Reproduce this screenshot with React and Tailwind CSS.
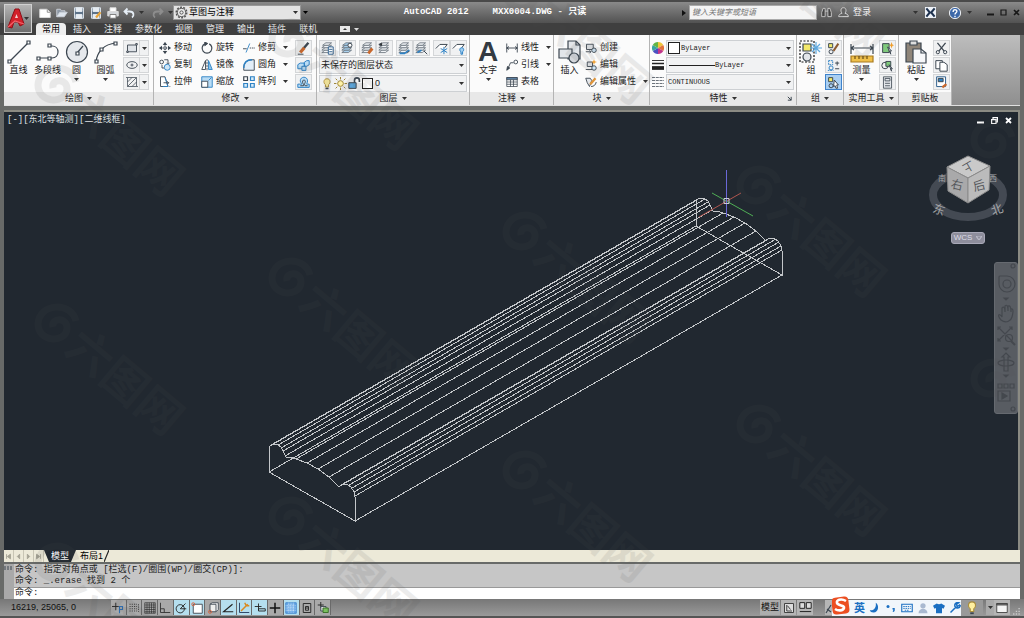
import React from "react";

const Svg = ({ s = 13, h, box = "0 0 16 16", children, className = "" }) => (
  <svg
    width={s}
    height={h || s}
    viewBox={box}
    fill="none"
    stroke="#3c4650"
    strokeWidth="1.2"
    className={`shrink-0 ${className}`}
    aria-hidden="true"
  >
    {children}
  </svg>
);

const Caret = ({ className = "text-[#333]" }) => (
  <svg width="5" height="3" viewBox="0 0 5 3" className={`shrink-0 ${className}`} aria-hidden="true">
    <path d="M0 0h5L2.5 3z" fill="currentColor" />
  </svg>
);

const Layers = ({ children, fill = "#f2f5f8" }) => (
  <>
    <g fill={fill} stroke="#66707a" strokeWidth="1">
      <path d="M1 13l4-3h8l-4 3z" />
      <path d="M1 10l4-3h8l-4 3z" />
      <path d="M1 7l4-3h8l-4 3z" />
      <path d="M2 4l4-3h7l-4 3z" />
    </g>
    {children}
  </>
);

const icons = {
  /* quick access */
  new: (
    <g stroke="#ddd">
      <path d="M1 3h10l4 4v7H1z" fill="#fff" />
      <path d="M11 3v4h4" stroke="#888" />
    </g>
  ),
  open: (
    <g stroke="#cdd3da">
      <path d="M1 13V3h5l1 2h5v2" fill="#8d98a5" />
      <path d="M1 13l4-6h10l-4 6z" fill="#dfe6ee" />
    </g>
  ),
  save: (
    <g stroke="#e4ebf2">
      <path d="M2 1h12v14H2z" fill="#5d7288" />
      <path d="M4 1h8v5H4zM4 10h8v5H4z" fill="#e8edf2" />
    </g>
  ),
  saveAs: (
    <g stroke="#e4ebf2">
      <path d="M2 1h12v14H2z" fill="#5d7288" />
      <path d="M4 1h8v5H4zM4 10h8v5H4z" fill="#e8edf2" />
      <path d="M8 14l6-7" stroke="#e9a53a" strokeWidth="3" />
    </g>
  ),
  print: (
    <g stroke="#dedede">
      <path d="M4 6V1h8v5" fill="#fff" />
      <path d="M1 6h14v6H1z" fill="#d3d6da" />
      <path d="M4 10h8v5H4z" fill="#fff" stroke="#777" />
    </g>
  ),
  undo: <path d="M6 2L2 6l4 4M2 6h7c6 0 6 6 3 8" stroke="#e6eef6" strokeWidth="2.4" />,
  redo: <path d="M10 2l4 4-4 4M14 6H7c-6 0-6 6-3 8" stroke="#8d8d8d" strokeWidth="2.4" />,
  gear: (
    <g stroke="#555">
      <circle cx="8" cy="8" r="6.500" strokeWidth="1.800" strokeDasharray="2.4 1.6" />
      <circle cx="8" cy="8" r="5" fill="#eee" />
      <circle cx="8" cy="8" r="2" />
    </g>
  ),
  /* draw */
  line: (
    <g>
      <path d="M3 21L21 3" />
      <path d="M1 20h3v3H1zM20 1h3v3h-3z" fill="#fff" />
    </g>
  ),
  pline: (
    <g>
      <path d="M2 18h14c8 0 8-12 0-12h-2" />
      <path d="M1 17h3v3H1zM12 17h3v3h-3zM12 4h3v3h-3z" fill="#fff" />
    </g>
  ),
  circle: (
    <g>
      <circle cx="12" cy="12" r="10.5" fill="#e5e8ec" />
      <path d="M12 13l6-7" />
      <path d="M11 12h3v3h-3z" fill="#fff" />
    </g>
  ),
  arc: (
    <g>
      <path d="M2 22C3 12 10 4 22 3" />
      <path d="M1 20h3v3H1zM6 8h3v3H6zM20 2h3v3h-3z" fill="#fff" />
    </g>
  ),
  rect: (
    <g>
      <path d="M2 4h12v9H2z" fill="#dfe3e8" />
      <path d="M1 12h2v2H1zM13 2h2v2h-2z" fill="#fff" />
    </g>
  ),
  ellipse: (
    <g>
      <ellipse cx="8" cy="8" rx="7" ry="4.5" />
      <path d="M8 6v4M6 8h4" />
    </g>
  ),
  hatch: <path d="M2 2h12v12H2zM2 8l6-6M2 14L14 2M8 14l6-6M0 2h2M14 14h2" strokeWidth="1" />,
  /* modify */
  move: (
    <g>
      <path d="M8 1v14M1 8h14" strokeDasharray="4 2" />
      <path d="M8 0l3 4H5zM8 16l3-4H5zM0 8l4-3v6zM16 8l-4-3v6z" fill="#3c4650" stroke="none" />
      <path d="M6.500 6.500h3v3h-3z" fill="#fff" />
    </g>
  ),
  rotate: (
    <g>
      <path d="M5 2.500A6.500 6.500 0 1 0 11 2.500" strokeWidth="1.600" />
      <path d="M5 0l4 2-4 3z" fill="#3c4650" />
    </g>
  ),
  trim: (
    <g>
      <path d="M0 9h5" />
      <path d="M4 14L9 2" stroke="#2e82c4" />
      <path d="M9 8h7" strokeDasharray="2 1" />
    </g>
  ),
  copy: (
    <g>
      <circle cx="3.500" cy="4" r="2.500" />
      <path d="M7 1h5v5M10 5l2 2 2-2" />
      <circle cx="11" cy="11" r="4" fill="#cfe6f7" stroke="#2e82c4" />
      <path d="M4 8v4h3" />
    </g>
  ),
  mirror: (
    <g>
      <path d="M6 2v12H1z" fill="#fff" />
      <path d="M10 2v12h5z" fill="#8cc3ea" stroke="#2e82c4" />
      <path d="M8 0v16" strokeDasharray="3 1" />
    </g>
  ),
  fillet: (
    <g>
      <path d="M1 15V12C1 5 5 1 12 1h3v14z" fill="#e2eef8" />
      <path d="M1 12C1 5 5 1 12 1" stroke="#2e82c4" strokeWidth="2" />
    </g>
  ),
  stretch: (
    <g>
      <path d="M2 1h6l4 13H2z" fill="#fff" />
      <path d="M8 2l4 12H5" stroke="#2e82c4" />
      <path d="M6 9h7M11 7l2 2-2 2M14 14h1" />
    </g>
  ),
  scale: (
    <g stroke="#2e82c4">
      <path d="M1 1h14v14H1z" fill="#b9dcf5" />
      <path d="M1 7h8v8H1z" fill="#fff" stroke="#3c4650" />
      <path d="M10 6l4-4" />
    </g>
  ),
  array: (
    <g strokeWidth="1.600">
      <path d="M1 1h5v5H1z" />
      <path d="M10 1h5v5h-5zM1 10h5v5H1zM10 10h5v5h-5z" fill="#d9ecf9" stroke="#2e82c4" />
    </g>
  ),
  erase: (
    <g>
      <path d="M14 1L8 8" strokeWidth="3" />
      <path d="M9 7L4 13" stroke="#c9682d" strokeWidth="4" />
      <path d="M1 15h7" />
    </g>
  ),
  explode: (
    <g stroke="#2e82c4" fill="#b9dcf5">
      <path d="M1 7l3-2h5v7H1zM9 4l3-2h3v5l-3 2H9z" />
      <path d="M6 9h5v5H6z" />
    </g>
  ),
  offset: (
    <g>
      <path d="M1 14v-4h5c0-1-2-2-2-4 0-6 9-6 9 0 0 2-1 3-1 4h3v4z" fill="#b9dcf5" stroke="#2e82c4" />
      <path d="M4 12h4c1-2-2-3-1-6 1-2 4-1 3 2-1 2-1 3 0 4h3" />
    </g>
  ),
  /* layers */
  layerProps: <Layers><path d="M9 6h6v9H9zM10 9h4M10 12h4" fill="#fff" stroke="#2e5f8c" /></Layers>,
  layerCur: <Layers fill="#a9d2f0"><circle cx="11" cy="4" r="2.500" fill="#fff" /></Layers>,
  layerMatch: <Layers><path d="M9 14l5-6" stroke="#c9682d" strokeWidth="3.500" /></Layers>,
  layerPrev: <Layers><path d="M5 1L1 3l4 2" fill="#333" /></Layers>,
  layerIso: <Layers><path d="M2 14h6l6-4" stroke="#2e82c4" strokeWidth="2" /><path d="M11 14l3-3" /></Layers>,
  layerUniso: <Layers><path d="M3 13l5-3" stroke="#2e82c4" strokeWidth="2" /><path d="M11 11l4 4" /></Layers>,
  layerFreeze: (
    <g>
      <path d="M1 8l5-5h9l-3 4" fill="#fff" />
      <path d="M11 6v9M7 8l8 5M15 8l-8 5" stroke="#2e82c4" />
    </g>
  ),
  layerOff: (
    <g>
      <path d="M1 8l5-5h9l-3 4" fill="#fff" />
      <path d="M12 7c-3 0-3 4-1 5v3h2v-3c2-1 2-5-1-5z" fill="#9fcdf0" stroke="#2e82c4" />
    </g>
  ),
  bulb: (
    <g>
      <path d="M8 1C3 1 3 7 6 9v3h4V9c3-2 3-8-2-8z" fill="#fff0a0" stroke="#a88c3c" />
      <path d="M6 14h4" strokeWidth="2" />
    </g>
  ),
  sun: (
    <g stroke="#9c8437">
      <circle cx="8" cy="8" r="3.500" fill="#fff2a8" />
      <path d="M8 0v3M8 13v3M0 8h3M13 8h3M2 2l2 2M12 12l2 2M14 2l-2 2M2 14l2-2" />
    </g>
  ),
  unlock: (
    <g>
      <path d="M1 7h9v7H1z" fill="#5ba3d8" />
      <path d="M8 7V4c0-4 6-4 6 0v2" strokeWidth="2" />
    </g>
  ),
  /* annotation */
  dim: <path d="M1 2v12M15 2v12M1 8h14M4 6L1 8l3 2M12 6l3 2-3 2" />,
  leader: (
    <g>
      <path d="M2 14L6 5h4" />
      <path d="M1 15l1-5 3 2z" fill="#3c4650" />
      <circle cx="13" cy="4" r="2.500" fill="#fff" />
    </g>
  ),
  table: (
    <g strokeWidth="1">
      <path d="M1 2h14v12H1z" fill="#fff" />
      <path d="M1 2h14v3H1z" fill="#5c7fa0" />
      <path d="M1 8h14M1 11h14M6 5v9M10 5v9" />
    </g>
  ),
  /* block */
  insert: (
    <g>
      <path d="M10 1h8l4 4v14H10z" fill="#e3e6ea" />
      <path d="M18 1v4h4" />
      <path d="M1 9h13v9H1z" fill="#e3e6ea" />
      <circle cx="16" cy="18" r="5" fill="#d3d7dc" />
    </g>
  ),
  create: (
    <g>
      <path d="M2 3h9v7H2z" fill="#e3e6ea" />
      <circle cx="12" cy="11" r="3" fill="#cfe6f7" />
      <path d="M1 13h7M6 11l2 2-2 2" />
    </g>
  ),
  blockEdit: (
    <g>
      <path d="M3 4h7v6H3zM1 14h9" fill="#e3e6ea" />
      <circle cx="12" cy="12" r="3" fill="#cfe6f7" />
      <path d="M12 0l1 3 3 1-3 1-1 3-1-3-3-1 3-1z" fill="#f0a030" stroke="none" />
    </g>
  ),
  attr: (
    <g>
      <path d="M1 3h6l2 3-3 8-3-5z" fill="#e3e6ea" />
      <path d="M7 11l7-8" stroke="#e0953a" strokeWidth="3" />
      <path d="M8 14c4 0 6-2 7-6" />
    </g>
  ),
  /* properties */
  wheel: (
    <g stroke="none">
      <path d="M8 8L8 0A8 8 0 0 1 15 4z" fill="#f0c53a" />
      <path d="M8 8L15 4A8 8 0 0 1 15 12z" fill="#e2733a" />
      <path d="M8 8L15 12A8 8 0 0 1 8 16z" fill="#c1358b" />
      <path d="M8 8V16A8 8 0 0 1 1 12z" fill="#4a4fc0" />
      <path d="M8 8L1 12A8 8 0 0 1 1 4z" fill="#38a3a0" />
      <path d="M8 8L1 4A8 8 0 0 1 8 0z" fill="#62b545" />
    </g>
  ),
  weights: (
    <g stroke="#222">
      <path d="M0 2h16" />
      <path d="M0 6h16" strokeWidth="2" />
      <path d="M0 12h16" strokeWidth="5" />
    </g>
  ),
  linetypes: <path d="M0 2h16M0 6h16M0 10h16M0 14h16" strokeDasharray="4 1" strokeWidth="1" />,
  /* groups */
  group: (
    <g>
      <path d="M1 1h14v21H1z" stroke="#111" strokeDasharray="2 1.500" />
      <path d="M4 4h8v7H4z" fill="#f3e96b" />
      <circle cx="8" cy="17" r="4" fill="#e3e6ea" />
      <path d="M17 2v12M11 8h12M13 4l8 8M21 4l-8 8" stroke="#5fa9de" />
    </g>
  ),
  groupEdit: (
    <g>
      <path d="M2 2h5v5H2z" fill="#f3e96b" />
      <circle cx="5" cy="12" r="2.500" />
      <path d="M8 11l6-9" stroke="#8c5a30" strokeWidth="2.500" />
    </g>
  ),
  ungroup: (
    <g>
      <path d="M2 2h5v5H2zM1 14h7" stroke="#2e82c4" strokeDasharray="2 1" />
      <circle cx="5" cy="11" r="2.500" stroke="#2e82c4" />
      <path d="M10 5h5M12.500 3v5M10 12h5" />
    </g>
  ),
  groupSel: (
    <g>
      <path d="M2 2h5v5H2z" fill="#f3e96b" />
      <circle cx="5" cy="12" r="2.500" />
      <path d="M9 5l5 6-2 0 1 4-2 0-1-3-2 1z" fill="#fff" />
    </g>
  ),
  /* utilities */
  measure: (
    <g>
      <path d="M1 4v10M23 4v10M1 8h22M4 6L1 8l3 2M20 6l3 2-3 2" />
      <path d="M1 16h22v6H1z" fill="#f0c04a" stroke="#a87a20" />
      <path d="M5 16v3M9 16v3M13 16v3M17 16v3" stroke="#6d4f12" />
    </g>
  ),
  quickSel: (
    <g>
      <path d="M2 2h8v11H2z" fill="#7fc97c" />
      <path d="M8 6l5 5-2 0 1 4z" fill="#fff" />
      <path d="M13 0l1 3 2 1-2 1-1 3-1-3-2-1 2-1z" fill="#f0a030" stroke="none" />
    </g>
  ),
  selAll: (
    <g>
      <circle cx="5" cy="8" r="4" />
      <path d="M6 3h6v6H6z" fill="#7fc97c" />
      <path d="M10 7l4 5-2 0 1 3z" fill="#fff" />
    </g>
  ),
  calc: (
    <g strokeWidth="1">
      <path d="M3 1h10v14H3z" fill="#e3e6ea" />
      <path d="M5 3h6v3H5zM5 9h6M5 12h6" />
    </g>
  ),
  /* clipboard */
  paste: (
    <g>
      <path d="M2 3h15v19H2z" fill="#8f8579" />
      <path d="M6 1h7v4H6z" fill="#ddd" />
      <path d="M9 9h8l5 4v10H9z" fill="#f6f7f9" />
      <path d="M17 9v4h5" />
    </g>
  ),
  cut: (
    <g>
      <path d="M3 1l8 10M13 1L5 11" strokeWidth="1.600" />
      <circle cx="3.500" cy="12.500" r="2" />
      <circle cx="12.500" cy="12.500" r="2" />
    </g>
  ),
  copyClip: (
    <g fill="#fff">
      <path d="M1 2h8v10H1z" />
      <path d="M6 4h5l4 3v8H6z" />
    </g>
  ),
  matchProp: (
    <g>
      <path d="M2 1h11v12H2z" fill="#fff" stroke="#2e5f8c" />
      <path d="M4 3h6v4H4z" fill="#2e82c4" />
      <path d="M9 14l5-4" stroke="#c9682d" strokeWidth="3" />
    </g>
  ),
  /* status bar */
  infer: (
    <g stroke="#222">
      <path d="M5 1v10M0 6h9" />
      <path d="M10 6h4v4h-4zM10 10v5" stroke="#2e6db0" strokeWidth="1.500" />
    </g>
  ),
  snap: <path d="M2 3h10M2 6h10M2 9h10M2 12h10M14 3v10" stroke="#333" strokeDasharray="1.500 1.500" />,
  grid: <path d="M1 1h14v14H1zM1 4h14M1 7h14M1 10h14M1 13h14M4 1v14M7 1v14M10 1v14M13 1v14" stroke="#222" strokeWidth=".8" />,
  ortho: <path d="M2 1v13h13M2 9h5v5" stroke="#333" />,
  polar: (
    <g stroke="#222">
      <circle cx="7" cy="9" r="5.500" />
      <path d="M7 9l7-7M7 9h8" />
    </g>
  ),
  osnap: (
    <g>
      <path d="M3 3h12v12H3z" fill="#fff" />
      <circle cx="3" cy="3" r="2" stroke="#d9603a" />
    </g>
  ),
  osnap3d: (
    <g>
      <path d="M4 3l3-2h8v9l-3 3" fill="#fff" />
      <path d="M4 3h8v10H4z" fill="#eee" />
      <circle cx="4" cy="13" r="2" stroke="#d9603a" />
    </g>
  ),
  otrack: <path d="M14 3L2 13h13" stroke="#222" strokeWidth="1.500" />,
  ducs: (
    <g>
      <path d="M2 1v13h13" stroke="#223a5c" />
      <path d="M4 12l9-9M9 1l2 4 4 0" stroke="#d98a20" strokeWidth="2" />
    </g>
  ),
  dyn: <path d="M6 2v9M1 6h9M6 9h9v3H6z" stroke="#222" />,
  lwt: <path d="M8 1v14M1 8h14" stroke="#111" strokeWidth="2" />,
  tpy: (
    <g stroke="#3f84cc">
      <path d="M1 1h14v14H1z" fill="#6cabe8" />
      <path d="M1 5h14M1 8h14M1 11h14M5 1v14M8 1v14M11 1v14" stroke="#d8ebfb" strokeDasharray="1 1" />
    </g>
  ),
  qp: <path d="M3 2h10v12H3zM6 6h4v5H6zM6 8h4" stroke="#222" />,
  sc: (
    <g>
      <path d="M5 0v8M1 4h8" stroke="#222" />
      <path d="M5 6h7v6H5z" fill="#ddd" />
      <path d="M8 8h7v6H8z" fill="#7bbf5f" stroke="#356b24" />
    </g>
  ),
  modelSpace: (
    <g stroke="#333">
      <path d="M2 2h12v12H2z" fill="#ddd" />
      <path d="M5 4v8h7M6 5l4 5" />
    </g>
  ),
  viewports: <path d="M1 2h6v7H1zM9 2h6v7H9zM1 13h14" stroke="#222" fill="#ddd" />,
  screen: (
    <g stroke="#444">
      <path d="M1 2h14v12H1z" fill="#f4f4f4" />
      <path d="M1 2h14v2H1z" fill="#777" />
    </g>
  ),
};

const Icon = ({ n, s = 13, box, className }) => (
  <Svg s={s} box={box} className={className}>
    {icons[n]}
  </Svg>
);

const Big = ({ n, label, caret, className = "w-[29px]" }) => (
  <button className={`flex flex-col items-center pt-[5px] ${className}`}>
    <Icon n={n} s={24} box="0 0 24 24" />
    <span className="mt-px leading-[11px]">{label}</span>
    {caret && <Caret className="mt-0.5 text-[#333]" />}
  </button>
);

const Small = ({ n, label, caret }) => (
  <button className="flex h-[17px] items-center gap-[3px] whitespace-nowrap">
    <Icon n={n} s={12} />
    <span>{label}</span>
    {caret && <Caret className="ml-1 text-[#333]" />}
  </button>
);

const Box = ({ n, on, label }) => (
  <button
    aria-label={label}
    className={`flex h-4 w-[17px] items-center justify-center border ${
      on ? "border-[#3f83cc] bg-[#a9cff2]" : "border-[#d4d6d8] bg-[#f0f1f2]"
    }`}
  >
    <Icon n={n} s={13} />
  </button>
);

const Split = ({ n, label }) => (
  <button aria-label={label} className="flex h-4 w-[26px] items-center border border-[#d4d6d8] bg-[#f0f1f2]">
    <span className="flex h-full w-4 items-center justify-center border-r border-[#d4d6d8]">
      <Icon n={n} s={12} />
    </span>
    <span className="flex flex-1 justify-center">
      <Caret />
    </span>
  </button>
);

const Combo = ({ label, value, children, mono, line }) => (
  <label className="relative flex h-4 min-w-0 flex-1 items-center border border-[#cdd0d3] bg-[#f1f2f3] pl-px">
    {children}
    {line && <span className="ml-px h-px w-[46px] shrink-0 bg-[#222]" />}
    <select
      aria-label={label}
      className={`h-full min-w-0 flex-1 appearance-none bg-transparent pr-3 outline-none ${
        mono ? "font-['Liberation_Mono',monospace] text-[7px]" : ""
      }`}
    >
      <option>{value}</option>
    </select>
    <span className="pointer-events-none absolute right-0.5">
      <Caret />
    </span>
  </label>
);

const Panel = ({ title, className, children, caret = true, corner }) => (
  <section className={`flex shrink-0 flex-col border-r border-[#b4b4b4] bg-[#fbfbfb] ${className}`}>
    <div className="flex h-[57px]">{children}</div>
    <div className="relative flex h-[13px] items-center justify-center gap-1 bg-[#e8e8e8]">
      {title}
      {caret && <Caret />}
      {corner && (
        <Svg s={5} box="0 0 6 6" className="absolute right-1">
          <path d="M1 1l4 4M5 1v4H1" />
        </Svg>
      )}
    </div>
  </section>
);

const tabs = ["插入", "注释", "参数化", "视图", "管理", "输出", "插件", "联机"];

const quick = [
  ["new", "新建"],
  ["open", "打开"],
  ["save", "保存"],
  ["saveAs", "另存为"],
  ["print", "打印"],
];

const Header = () => (
  <header className="flex bg-[#3f3f3f] pl-1">
    <button
      aria-label="应用程序菜单"
      className="relative z-10 mt-1 flex h-[29px] w-7 shrink-0 items-center justify-center border border-[#d0d0d0] bg-linear-to-b from-[#b5b5b5] to-[#6d6d6d]"
    >
      <Svg s={18} h={21} box="0 0 18 21" className="-ml-1">
        <path d="M1 19L8 1h4l5 15-4 2-2-4H7l-2 6z" fill="#d3202a" stroke="#8d0f17" strokeWidth="1" />
        <path d="M8 10l1.500-4L11 10z" fill="#f3d0d0" stroke="none" />
        <path d="M1 19l7-6 9 3" stroke="#f0656b" />
      </Svg>
      <Caret className="absolute right-0.5 text-[#333]" />
    </button>
    <div className="min-w-0 flex-1">
      <div className="-ml-8 flex h-[23px] items-center border-t-2 border-[#4a4a4a] bg-linear-to-b from-[#8a8a8a] to-[#525252] pl-[38px] text-white">
        <div className="flex items-center gap-1">
          {quick.map(([n, label]) => (
            <button key={n} aria-label={label} className="flex w-[13px] justify-center">
              <Icon n={n} s={12} />
            </button>
          ))}
          <button aria-label="放弃" className="flex items-center gap-1">
            <Icon n="undo" s={12} />
            <Caret />
          </button>
          <button aria-label="重做" className="ml-1 flex items-center gap-1">
            <Icon n="redo" s={12} />
            <Caret />
          </button>
        </div>
        <label className="relative flex h-[15px] w-32 items-center border border-[#999] bg-[#e4e4e4] pl-px text-black">
          <Icon n="gear" s={13} />
          <select aria-label="工作空间" className="ml-px h-full flex-1 appearance-none bg-transparent outline-none">
            <option>草图与注释</option>
          </select>
          <Caret className="pointer-events-none absolute right-0.5 text-[#333]" />
        </label>
        <Caret className="ml-0.5 text-black" />
        <h1 className="flex flex-1 justify-center gap-6 whitespace-pre font-['Liberation_Mono','Noto_Sans_CJK_SC',monospace] font-bold">
          <span>AutoCAD 2012</span>
          <span>MXX0004.DWG - 只读</span>
        </h1>
        <div className="flex items-center">
          <svg width="4" height="6" viewBox="0 0 4 6" aria-hidden="true">
            <path d="M0 0l4 3-4 3z" fill="#111" />
          </svg>
          <input
            aria-label="搜索"
            placeholder="键入关键字或短语"
            className="ml-[3px] h-[15px] w-32 border border-[#aaa] bg-[#f4f4f4] px-0.5 text-[8px] text-black italic outline-none placeholder:text-[#777]"
          />
          <button aria-label="查找" className="ml-1">
            <Svg s={11}>
              <path d="M1 14V8l2-6h3v12zM15 14V8l-2-6h-3v12zM6 6h4" fill="#444" stroke="#ddd" />
            </Svg>
          </button>
          <button className="ml-1.5 flex items-center gap-1">
            <Svg s={11}>
              <path d="M8 1c-5 0-4 7-2 8-3 1-5 2-5 5h14c0-3-2-4-5-5 2-1 3-8-2-8z" fill="#666" stroke="#eee" />
            </Svg>
            登录
          </button>
          <Caret className="ml-[42px] text-[#333]" />
          <button aria-label="Exchange" className="ml-[7px]">
            <Svg s={11}>
              <path d="M0 0h16v16H0z" fill="#eef2f8" stroke="none" />
              <path d="M2 2l5 6-5 6M14 2L9 8l5 6" stroke="#1f3350" strokeWidth="3" />
            </Svg>
          </button>
          <button aria-label="帮助" className="ml-[13px] flex items-center gap-1.5">
            <Svg s={12}>
              <circle cx="8" cy="8" r="7.500" fill="#3d68a8" stroke="#fff" />
              <path d="M5.500 6.500c0-4 5-3.500 5-.8 0 2-2.500 1.800-2.500 4.300M8 11.500v2" stroke="#fff" strokeWidth="1.800" />
            </Svg>
            <Caret />
          </button>
          <div className="ml-[15px] flex gap-1.5 pr-1">
            <button aria-label="最小化">
              <Svg s={7} box="0 0 7 7"><path d="M0 5.500h7" stroke="#181818" strokeWidth="2" /></Svg>
            </button>
            <button aria-label="最大化">
              <Svg s={7} box="0 0 7 7"><path d="M1 1h5v5H1z" stroke="#181818" /></Svg>
            </button>
            <button aria-label="关闭">
              <Svg s={7} box="0 0 7 7"><path d="M1 1l5 5M6 1L1 6" stroke="#181818" strokeWidth="1.600" /></Svg>
            </button>
          </div>
        </div>
      </div>
      <nav className="flex h-3 items-center gap-px pl-1 text-[#e8e8e8]">
        <button className="h-[13px] rounded-t-sm bg-[#eeeeee] px-1.5 leading-[12px] text-black">常用</button>
        {tabs.map((t) => (
          <button key={t} className="px-1.5 leading-[12px]">
            {t}
          </button>
        ))}
        <button aria-label="最小化功能区" className="ml-4 flex items-center gap-1">
          <Svg s={10} h={6} box="0 0 10 6">
            <path d="M0 0h10v6H0z" fill="#e8e8e8" stroke="none" />
            <path d="M3 4l2-2 2 2z" fill="#333" stroke="none" />
          </Svg>
          <Caret className="text-[#ddd]" />
        </button>
      </nav>
    </div>
  </header>
);

const Ribbon = () => (
  <div className="mx-1 flex border-b border-[#e0e0e0] bg-linear-to-b from-[#bdbdbd] to-[#8f8f8f] text-[#222]">
    <Panel title="绘图" className="w-[150px]">
      <Big n="line" label="直线" />
      <Big n="pline" label="多段线" />
      <Big n="circle" label="圆" caret />
      <Big n="arc" label="圆弧" caret />
      <div className="ml-[3px] flex flex-col gap-px pt-[5px]">
        <Split n="rect" label="矩形" />
        <Split n="ellipse" label="椭圆" />
        <Split n="hatch" label="图案填充" />
      </div>
    </Panel>
    <Panel title="修改" className="w-[163px]">
      <div className="flex gap-[9px] pt-1 pl-[5px]">
        <div>
          <Small n="move" label="移动" />
          <Small n="copy" label="复制" />
          <Small n="stretch" label="拉伸" />
        </div>
        <div>
          <Small n="rotate" label="旋转" />
          <Small n="mirror" label="镜像" />
          <Small n="scale" label="缩放" />
        </div>
        <div>
          <Small n="trim" label="修剪" caret />
          <Small n="fillet" label="圆角" caret />
          <Small n="array" label="阵列" caret />
        </div>
      </div>
      <div className="mr-1 ml-auto flex flex-col gap-px pt-[5px]">
        <Box n="erase" label="删除" />
        <Box n="explode" label="分解" />
        <Box n="offset" label="偏移" />
      </div>
    </Panel>
    <Panel title="图层" className="w-[153px]">
      <div className="flex flex-1 flex-col gap-px px-0.5 pt-[5px]">
        <div className="flex justify-between">
          <Box n="layerProps" label="图层特性" />
          <Box n="layerCur" label="置为当前" />
          <div className="flex">
            <Box n="layerMatch" label="匹配" />
            <Box n="layerPrev" label="上一个" />
          </div>
          <div className="flex">
            <Box n="layerIso" label="隔离" />
            <Box n="layerUniso" label="取消隔离" />
          </div>
          <div className="flex">
            <Box n="layerFreeze" label="冻结" />
            <Box n="layerOff" label="关闭" />
          </div>
        </div>
        <Combo label="图层状态" value="未保存的图层状态" />
        <Combo label="图层" value="0">
          <span className="mr-0.5 flex items-center gap-px">
            <Icon n="bulb" s={12} />
            <Icon n="sun" s={13} />
            <Icon n="unlock" s={13} />
            <span className="h-[11px] w-[11px] border border-[#222] bg-white" />
          </span>
        </Combo>
      </div>
    </Panel>
    <Panel title="注释" className="w-[84px]">
      <button className="flex w-9 flex-col items-center pt-[5px]">
        <span className="h-6 font-['Liberation_Sans',sans-serif] text-[28px] leading-6 font-bold text-[#333a42]">A</span>
        <span className="mt-px leading-[11px]">文字</span>
        <Caret className="mt-0.5 text-[#333]" />
      </button>
      <div className="pt-1">
        <Small n="dim" label="线性" caret />
        <Small n="leader" label="引线" caret />
        <Small n="table" label="表格" />
      </div>
    </Panel>
    <Panel title="块" className="w-[96px]">
      <Big n="insert" label="插入" className="w-[31px]" />
      <div className="pt-1">
        <Small n="create" label="创建" />
        <Small n="blockEdit" label="编辑" />
        <Small n="attr" label="编辑属性" caret />
      </div>
    </Panel>
    <Panel title="特性" className="w-[147px]" corner>
      <div className="flex flex-1 flex-col gap-px px-0.5 pt-[5px]">
        <div className="flex items-center gap-0.5">
          <Icon n="wheel" s={12} />
          <Combo label="颜色" value="ByLayer" mono>
            <span className="mr-px h-3 w-3 border border-[#222] bg-white" />
          </Combo>
        </div>
        <div className="flex items-center gap-0.5">
          <Icon n="weights" s={12} />
          <Combo label="线宽" value="ByLayer" mono line />
        </div>
        <div className="flex items-center gap-0.5">
          <Icon n="linetypes" s={12} />
          <Combo label="线型" value="CONTINUOUS" mono />
        </div>
      </div>
    </Panel>
    <Panel title="组" className="w-[47px]">
      <Big n="group" label="组" className="w-7" />
      <div className="flex flex-col gap-px pt-[5px]">
        <Box n="groupEdit" label="组编辑" />
        <Box n="ungroup" label="解除编组" />
        <Box n="groupSel" label="启用组选择" on />
      </div>
    </Panel>
    <Panel title="实用工具" className="w-[55px]">
      <Big n="measure" label="测量" caret className="w-[35px]" />
      <div className="flex flex-col gap-px pt-[5px]">
        <Box n="quickSel" label="快速选择" />
        <Box n="selAll" label="全部选择" />
        <Box n="calc" label="计算器" />
      </div>
    </Panel>
    <Panel title="剪贴板" className="w-[53px]" caret={false}>
      <Big n="paste" label="粘贴" caret className="w-[34px]" />
      <div className="flex flex-col gap-px pt-[5px]">
        <Box n="cut" label="剪切" />
        <Box n="copyClip" label="复制剪裁" />
        <Box n="matchProp" label="特性匹配" />
      </div>
    </Panel>
  </div>
);

/* Front section outline; every edge is extruded by (428, -246) */
const outline =
  "M269 472V447L272 444H277L281 447L284 453L286 457L293 458L307 463L318 469L329 477L339 487L342 484H347L351 487L354 492L355 497V521Z";
const edges = [
  [269, 472], [270, 446], [271, 445], [273, 444], [278, 445], [281, 448], [283, 451], [285, 456],
  [296, 459], [307, 463], [318, 469], [329, 477], [340, 486], [341, 485], [343, 484],
  [349, 485], [352, 488], [354, 492], [355, 496], [355, 521],
];

const Model = () => (
  <svg className="absolute inset-0 h-full w-full" viewBox="4 112 1014 438" fill="none" aria-hidden="true">
    <g stroke="#c3c6c9" shapeRendering="crispEdges">
      <path d={outline} />
      <path d={outline} transform="translate(427 -246)" />
      {edges.map(([x, y]) => (
        <path key={`${x}-${y}`} d={`M${x} ${y}l427 -246`} />
      ))}
    </g>
    <path d="M699 217L741 193" stroke="#b0564f" />
    <path d="M712 193L753 216" stroke="#4fae55" />
    <path d="M726.500 170V217" stroke="#6a68d8" />
    <path d="M724 198.500h5v5h-5z" stroke="#c9c9d8" />
  </svg>
);

const ViewCube = () => (
  <div className="absolute top-[39px] right-[9px] flex w-[82px] flex-col items-center">
    <svg width="82" height="74" viewBox="927 151 82 74" aria-label="ViewCube" fontFamily="'Noto Sans CJK SC', sans-serif">
      <ellipse cx="968" cy="195" rx="35" ry="22" fill="none" stroke="#444a53" strokeWidth="8" />
      <g fill="#a4a6a8" fontSize="12">
        <text x="938" y="181" fontSize="8">南</text>
        <text x="989" y="181" fontSize="8">西</text>
        <text x="933" y="214" transform="rotate(20 939 210)">东</text>
        <text x="991" y="214" transform="rotate(-20 996 210)">北</text>
      </g>
      <path d="M968 156L947 167L968 178L990 166Z" fill="#c9c9c9" stroke="#8b8b8b" />
      <path d="M947 167L968 178V203L948 191Z" fill="#a9a9aa" stroke="#8b8b8b" />
      <path d="M990 166L968 178V203L989 190Z" fill="#bbbbbb" stroke="#8b8b8b" />
      <g fill="#55585c">
        <text x="962" y="171" fontSize="11" transform="rotate(150 968 167)">上</text>
        <text x="951" y="189" fontSize="12" transform="rotate(12 957 185)">右</text>
        <text x="973" y="190" fontSize="12" transform="rotate(-14 979 186)">后</text>
      </g>
    </svg>
    <button className="mt-[7px] flex h-3 w-[34px] items-center justify-center gap-1 rounded-[3px] border border-[#a9a9b8] bg-[#8e8e9c] font-['Liberation_Sans',sans-serif] text-[8px] text-[#dcdce6]">
      WCS
      <Svg s={6} h={4} box="0 0 6 4"><path d="M0 0h6L3 4z" stroke="#b9b9c6" /></Svg>
    </button>
  </div>
);

const NavBar = () => (
  <div className="absolute top-[150px] right-0 flex w-6 flex-col items-center rounded-[3px] border border-[#666a70] bg-[#585c62]">
    <svg width="22" height="150" viewBox="0 0 22 150" fill="none" stroke="#44484e" strokeWidth="1.2" aria-label="导航栏">
      <circle cx="18" cy="3" r="2" />
      <path d="M4 14q0-1 1-1h7a8 8 0 1 1-8 8z" />
      <circle cx="12" cy="21" r="4" />
      <path d="M6 57c-5-6-1-7 1-3V45c2-2 3 0 3 4v-6c2-2 3 0 3 5v-5c2-1 3 1 3 6v-3c3-1 2 4 1 8s-6 7-11 3z" />
      <path d="M3 64l14 14M17 64L3 78M3 67v-3h3M14 64h3v3M3 75v3h3" />
      <circle cx="14" cy="75" r="3.500" />
      <path d="M16 78l4 4" strokeWidth="2" />
      <ellipse cx="11" cy="100" rx="8" ry="3" />
      <path d="M9 108V94H7l4-4 4 4h-2v14z" />
      <path d="M3 121h4v4H3zM9 121h4v4H9zM15 121h4v4h-4zM3 128h12v10H3z" />
      <path d="M7 130l5 3-5 3zM9 35h4l-2 2zM9 85h4l-2 2zM9 112h4l-2 2z" fill="#44484e" />
      <circle cx="18" cy="146" r="2" />
    </svg>
  </div>
);

const Canvas = () => (
  <main className="relative mx-1 mt-1 min-h-[200px] flex-1 overflow-hidden border-t-2 border-r-2 border-[#8b8b83] bg-[#212830] text-[#dfe1e3]">
    <Model />
    <div className="relative flex justify-between pt-0.5 pr-1.5 pl-[3px] font-['Liberation_Mono','Noto_Sans_CJK_SC',monospace]">
      <div className="flex">
        <button>[-]</button>
        <button>[东北等轴测]</button>
        <button>[二维线框]</button>
      </div>
      <div className="flex items-center gap-[7px]">
        <button aria-label="最小化视口">
          <Svg s={7} box="0 0 7 7"><path d="M0 5.500h7" stroke="#fff" strokeWidth="2" /></Svg>
        </button>
        <button aria-label="还原视口">
          <Svg s={7} box="0 0 7 7"><path d="M2 2V.6h4.400V5H5M.6 2.600h4.400v4H.6z" stroke="#fff" /></Svg>
        </button>
        <button aria-label="关闭视口">
          <Svg s={7} box="0 0 7 7"><path d="M1 1l5 5M6 1L1 6" stroke="#fff" strokeWidth="1.800" /></Svg>
        </button>
      </div>
    </div>
    <ViewCube />
    <NavBar />
  </main>
);

const LayoutTabs = () => (
  <div className="mx-1 flex h-3 items-center bg-[#ece9d8] text-black">
    {["M2 1v6M7 1L3 4l4 3z", "M6 1L3 4l3 3z", "M3 1l3 3-3 3z", "M7 1v6M2 1l4 3-4 3z"].map((d) => (
      <button key={d} aria-label="布局导航" className="flex h-3 w-[10px] items-center justify-center border-r border-[#c8c5b4]">
        <Svg s={7} box="0 0 9 8"><path d={d} stroke="#a5a394" fill="#a5a394" /></Svg>
      </button>
    ))}
    <button className="relative h-3 w-8 text-white">
      <svg className="absolute inset-0" width="32" height="12" viewBox="0 0 32 12" aria-hidden="true">
        <path d="M0 0h32l-5 12H5z" fill="#212830" />
      </svg>
      <span className="relative block leading-[12px]">模型</span>
    </button>
    <button className="ml-1 leading-[12px]">布局1</button>
    <Svg s={5} h={12} box="0 0 5 12" className="ml-px"><path d="M5 0L0 12" stroke="#222" /></Svg>
  </div>
);

const CommandLine = () => (
  <div className="mx-1 mt-0.5 flex bg-[#c6c6c6] font-['Liberation_Mono','Noto_Sans_CJK_SC',monospace] text-[#222]">
    <div className="w-2.5 shrink-0 bg-[#a9a9a9] pt-0.5">
      <Svg s={8} h={4} box="0 0 8 4"><path d="M0 1h8M0 3h8" strokeDasharray="2 1" strokeWidth="1" /></Svg>
    </div>
    <div className="min-w-0 flex-1">
      <div className="px-px pt-px leading-[11px]">
        <p>命令: 指定对角点或 [栏选(F)/圈围(WP)/圈交(CP)]:</p>
        <p>命令: _.erase 找到 2 个</p>
      </div>
      <label className="flex h-3 items-center border-t border-[#999] bg-white px-px">
        命令:
        <input className="h-full min-w-0 flex-1 bg-white px-1 outline-none" />
      </label>
    </div>
  </div>
);

const statusItems = [
  ["infer", 0, "推断约束"], ["snap", 0, "捕捉"], ["grid", 0, "栅格"], ["ortho", 0, "正交"],
  ["polar", 1, "极轴"], ["osnap", 1, "对象捕捉"], ["osnap3d", 0, "三维对象捕捉"], ["otrack", 1, "对象追踪"],
  ["ducs", 1, "动态UCS"], ["dyn", 1, "动态输入"], ["lwt", 0, "线宽"], ["tpy", 1, "透明度"],
  ["qp", 0, "快捷特性"], ["sc", 0, "选择循环"],
];

const StatusBar = () => (
  <footer className="flex h-[19px] items-center border-b-2 border-[#555] bg-linear-to-b from-[#777] to-[#9a9a9a] pr-1 pl-[11px] text-[#111]">
    <span className="w-[100px] shrink-0">16219, 25065, 0</span>
    <div className="grid w-[220px] grid-cols-14">
      {statusItems.map(([n, on, label]) => (
        <button
          key={n}
          aria-label={label}
          className={`flex h-[15px] items-center justify-center border-r border-[#6a6a6a] ${
            on ? "bg-[#b5dfef]" : "bg-[#a9a9a9]"
          }`}
        >
          <Icon n={n} s={12} />
        </button>
      ))}
    </div>
    <div className="ml-auto flex items-center">
      <button className="h-[15px] bg-[#adadad] px-px leading-[15px]">模型</button>
      <button aria-label="快速查看布局" className="ml-px flex h-[15px] w-[15px] items-center justify-center bg-[#b5b5b5]">
        <Icon n="modelSpace" s={12} />
      </button>
      <button aria-label="快速查看图形" className="ml-px flex h-[15px] w-4 items-center justify-center bg-[#b5b5b5]">
        <Icon n="viewports" s={13} />
      </button>
      <div className="ml-3 flex h-[15px] w-[7px] items-center bg-[#b5b5b5]">
        <Svg s={7} h={12} box="0 0 7 12"><path d="M1 11l5-8M2 7l4 3" /></Svg>
      </div>
      <div className="relative flex h-4 items-center gap-1 bg-[#f1f6fb] text-[#1b6fc2]">
        <svg width="18" height="19" viewBox="1 0 18 19" className="-mt-1" aria-hidden="true">
          <rect x="1" y="1" width="17" height="17" rx="4" fill="#ec4f22" transform="rotate(-7 10 10)" />
          <path d="M15 5C10 2 5 4 6 7s8 2 7 5-6 3-9 1" stroke="#fff" strokeWidth="2.600" fill="none" />
        </svg>
        <button className="text-[11px] leading-4 font-bold">英</button>
        <Svg s={12}><path d="M9 1c5 3 4 13-3 13-3 0-4-1-5-3 6 1 9-4 8-10z" fill="#1b6fc2" stroke="none" /></Svg>
        <Svg s={12}><circle cx="4" cy="6" r="2" fill="#1b6fc2" stroke="none" /><path d="M10 9h2v2l-1 2" stroke="#1b6fc2" strokeWidth="2" /></Svg>
        <Svg s={12}>
          <path d="M1 3h14v10H1z" stroke="#1b6fc2" strokeWidth="1.500" />
          <path d="M3 6h10M3 8.500h10M5 11h6" stroke="#1b6fc2" strokeDasharray="2 1" />
        </Svg>
        <Svg s={12}><circle cx="8" cy="5" r="3.500" fill="#a9b9d0" stroke="none" /><path d="M2 15c0-8 12-8 12 0z" fill="#a9b9d0" stroke="none" /></Svg>
        <Svg s={12}><path d="M5 2q3 2 6 0l5 3-2 4-2-1v7H4V8L2 9 0 5z" fill="#1b6fc2" stroke="none" /></Svg>
        <Svg s={12}><path d="M2 14l7-7M14 4l-3 2-1-3 3-2c-4-1-6 2-5 5 2 3 6 3 7-1z" stroke="#1b6fc2" strokeWidth="2" /></Svg>
      </div>
      <button aria-label="隔离对象" className="flex h-[15px] w-[22px] items-center justify-center bg-[#999]">
        <Icon n="bulb" s={14} />
      </button>
      <button aria-label="状态栏菜单" className="ml-[3px] flex h-[15px] w-2 items-center justify-center bg-[#aaa]">
        <Caret />
      </button>
      <button aria-label="全屏显示" className="flex h-[15px] w-4 items-center justify-center bg-[#b5b5b5]">
        <Icon n="screen" s={12} />
      </button>
      <Svg s={8} box="0 0 9 9" className="ml-0.5 self-end">
        <path d="M8 0v9M5 3v6M2 6v3" stroke="#ccc" strokeWidth="1.500" strokeDasharray="1.500 1.500" />
      </Svg>
    </div>
  </footer>
);

/* [x, y, text] of every repeat of the mark */
const marks = [
  [57, 86, "六图网"], [57, 325, "六图网"], [57, 564, "六图"],
  [291, 40, "六图网"], [291, 279, "六图网"], [291, 518, "六图网"],
  [525, -6, "六图网"], [525, 233, "六图网"], [525, 472, "六图网"],
  [759, -52, " 图网"], [759, 187, "六图网"], [759, 426, "六图网"],
  [993, 141, ""], [993, 380, ""],
];

const Watermark = () => (
  <svg
    className="pointer-events-none absolute inset-0 z-20 h-full w-full opacity-10"
    fontFamily="'Noto Sans CJK SC', sans-serif"
    fontSize="45"
    fontWeight="700"
    aria-hidden="true"
  >
    {marks.map(([x, y, text]) => (
      <g key={`${x},${y}`} transform={`translate(${x} ${y})`} fill="#505050">
        <path
          d="M19 -4C14 -24 -18 -22 -19 -1C-19 17 8 19 10 4C11 -8 -6 -8 -4 2"
          fill="none"
          stroke="#505050"
          strokeWidth="7"
        />
        {text && (
          <text x={text[0] === " " ? 66 : 21} y="16" transform="rotate(40)">
            {text.trim()}
          </text>
        )}
      </g>
    ))}
  </svg>
);

const App = () => {
  return (
    <div className="relative flex min-h-screen flex-col overflow-hidden bg-[#686a68] font-['Liberation_Sans','Noto_Sans_CJK_SC',sans-serif] text-[9px]">
      <Header />
      <Ribbon />
      <Canvas />
      <LayoutTabs />
      <CommandLine />
      <StatusBar />
      <Watermark />
    </div>
  );
};

export default App;
